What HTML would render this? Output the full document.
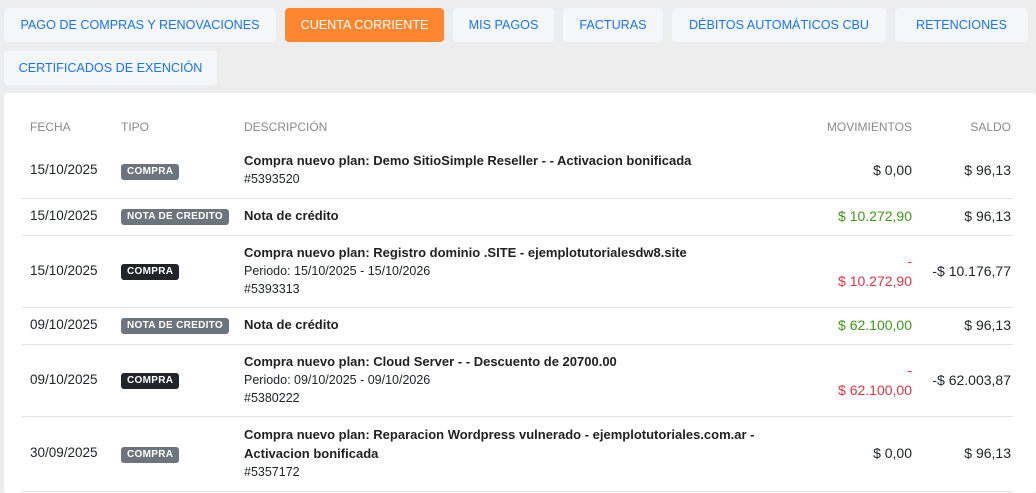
<!DOCTYPE html><html><head><meta charset="utf-8"><style>
body{margin:0;width:1036px;height:493px;background:#ededed;font-family:"Liberation Sans",sans-serif;position:relative;overflow:hidden;color:#212529}
.t{position:absolute;height:34px;line-height:34px;background:#f5f6f8;border-radius:4px;color:#1a75f0;font-size:12.6px;text-align:center;white-space:nowrap}
.card{position:absolute;left:4px;top:93px;width:1032px;height:400px;background:#fff;border-radius:4px}
.a{position:absolute;white-space:nowrap;font-size:13.5px}
.h{color:#8a8a8a;font-size:12px}
.bo{font-weight:bold;font-size:13px;color:#222}
.b{position:absolute;font-size:10px;font-weight:bold;color:#fff;background:#6c757d;border-radius:3px;height:16px;line-height:16px;padding:0 6px;letter-spacing:.3px}
.d{background:#212529}
.ln{position:absolute;left:22px;width:991px;height:1px;background:#dfe2e6}
.r{text-align:right;font-size:14px}
.g{color:#3c9a16}.rd{color:#e03545}
.s{font-size:12.5px}
</style></head><body>
<div class="t" style="left:4px;top:8px;width:272px">PAGO DE COMPRAS Y RENOVACIONES</div>
<div class="t" style="left:285px;top:8px;width:159px;background:#fd8631;color:#fff">CUENTA CORRIENTE</div>
<div class="t" style="left:453px;top:8px;width:101px">MIS PAGOS</div>
<div class="t" style="left:563px;top:8px;width:100px">FACTURAS</div>
<div class="t" style="left:672px;top:8px;width:214px">DÉBITOS AUTOMÁTICOS CBU</div>
<div class="t" style="left:895px;top:8px;width:133px">RETENCIONES</div>
<div class="t" style="left:4px;top:51px;width:213px">CERTIFICADOS DE EXENCIÓN</div>
<div class="card"></div>
<div class="a h" style="left:30px;top:120px">FECHA</div>
<div class="a h" style="left:121px;top:120px">TIPO</div>
<div class="a h" style="left:244px;top:120px">DESCRIPCIÓN</div>
<div class="a h r" style="right:124px;top:120px;font-size:12px">MOVIMIENTOS</div>
<div class="a h r" style="right:25px;top:120px;font-size:12px">SALDO</div>

<div class="a" style="left:30px;top:162px">15/10/2025</div>
<div class="b" style="left:121px;top:164px">COMPRA</div>
<div class="a bo" style="left:244px;top:153px">Compra nuevo plan: Demo SitioSimple Reseller - - Activacion bonificada</div>
<div class="a s" style="left:244px;top:172px">#5393520</div>
<div class="a r" style="right:124px;top:162px">$ 0,00</div>
<div class="a r" style="right:25px;top:162px">$ 96,13</div>
<div class="ln" style="top:198px"></div>

<div class="a" style="left:30px;top:208px">15/10/2025</div>
<div class="b" style="left:121px;top:209px">NOTA DE CREDITO</div>
<div class="a bo" style="left:244px;top:208px">Nota de crédito</div>
<div class="a r g" style="right:124px;top:208px">$ 10.272,90</div>
<div class="a r" style="right:25px;top:208px">$ 96,13</div>
<div class="ln" style="top:235px"></div>

<div class="a" style="left:30px;top:263px">15/10/2025</div>
<div class="b d" style="left:121px;top:264px">COMPRA</div>
<div class="a bo" style="left:244px;top:245px">Compra nuevo plan: Registro dominio .SITE - ejemplotutorialesdw8.site</div>
<div class="a s" style="left:244px;top:264px">Periodo: 15/10/2025 - 15/10/2026</div>
<div class="a s" style="left:244px;top:282px">#5393313</div>
<div class="a r rd" style="right:124px;top:253px">-</div>
<div class="a r rd" style="right:124px;top:273px">$ 10.272,90</div>
<div class="a r" style="right:25px;top:263px">-$ 10.176,77</div>
<div class="ln" style="top:307px"></div>

<div class="a" style="left:30px;top:317px">09/10/2025</div>
<div class="b" style="left:121px;top:318px">NOTA DE CREDITO</div>
<div class="a bo" style="left:244px;top:317px">Nota de crédito</div>
<div class="a r g" style="right:124px;top:317px">$ 62.100,00</div>
<div class="a r" style="right:25px;top:317px">$ 96,13</div>
<div class="ln" style="top:344px"></div>

<div class="a" style="left:30px;top:372px">09/10/2025</div>
<div class="b d" style="left:121px;top:373px">COMPRA</div>
<div class="a bo" style="left:244px;top:354px">Compra nuevo plan: Cloud Server - - Descuento de 20700.00</div>
<div class="a s" style="left:244px;top:373px">Periodo: 09/10/2025 - 09/10/2026</div>
<div class="a s" style="left:244px;top:391px">#5380222</div>
<div class="a r rd" style="right:124px;top:362px">-</div>
<div class="a r rd" style="right:124px;top:382px">$ 62.100,00</div>
<div class="a r" style="right:25px;top:372px">-$ 62.003,87</div>
<div class="ln" style="top:416px"></div>

<div class="a" style="left:30px;top:445px">30/09/2025</div>
<div class="b" style="left:121px;top:447px">COMPRA</div>
<div class="a bo" style="left:244px;top:427px">Compra nuevo plan: Reparacion Wordpress vulnerado - ejemplotutoriales.com.ar -</div>
<div class="a bo" style="left:244px;top:446px">Activacion bonificada</div>
<div class="a s" style="left:244px;top:465px">#5357172</div>
<div class="a r" style="right:124px;top:445px">$ 0,00</div>
<div class="a r" style="right:25px;top:445px">$ 96,13</div>
<div class="ln" style="top:491px"></div>
</body></html>
